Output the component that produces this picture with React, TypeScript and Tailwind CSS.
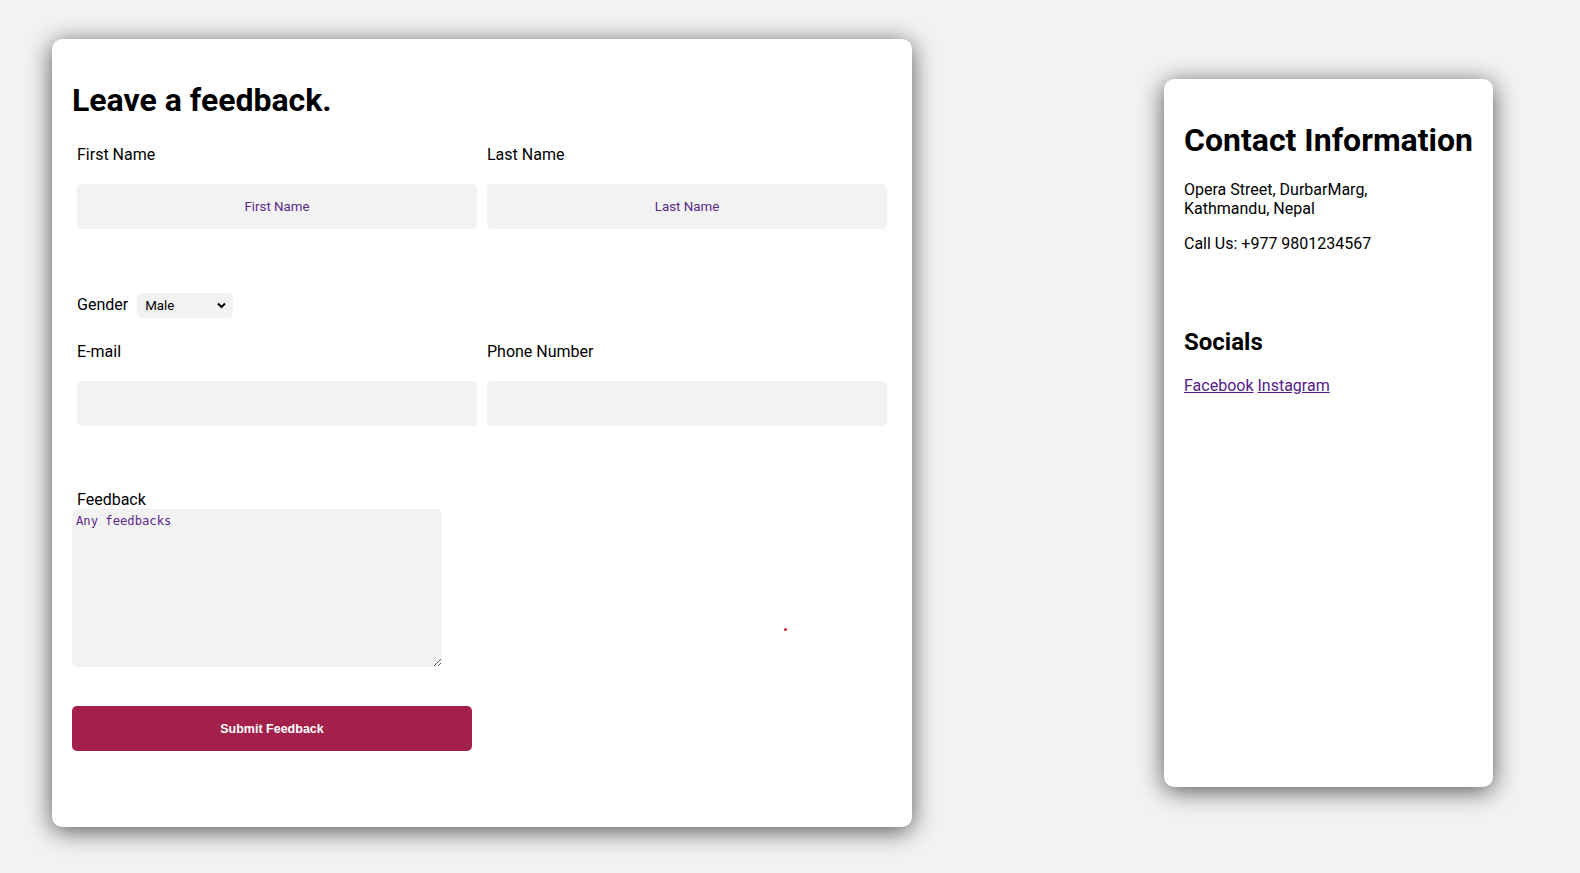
import React from "react";

export default function App() {
  const font = { fontFamily: "Roboto, 'Noto Sans', sans-serif" };
  return (
    <div
      className="w-[1580px] h-[873px] bg-[#f2f2f2] flex items-start pl-[52px] pt-[39px] text-black"
      style={font}
    >
      {/* Feedback card */}
      <div className="relative w-[860px] h-[788px] bg-white rounded-[10px] shadow-[0_4px_24px_rgba(0,0,0,0.65)] pt-[41px] px-[20px] flex flex-col">
        <h1 className="text-[32px] leading-[40px] font-bold">Leave a feedback.</h1>

        <div className="flex mt-[25px]">
          <div className="w-[410px] px-[5px] flex flex-col">
            <label className="text-[16px] leading-[19px]">First Name</label>
            <input
              placeholder="First Name"
              className="mt-[20px] h-[45px] w-[400px] bg-[#f2f2f2] rounded-[5px] text-center text-[13.33px] outline-none placeholder:text-[#5a2a8a]"
            />
          </div>
          <div className="w-[410px] px-[5px] flex flex-col">
            <label className="text-[16px] leading-[19px]">Last Name</label>
            <input
              placeholder="Last Name"
              className="mt-[20px] h-[45px] w-[400px] bg-[#f2f2f2] rounded-[5px] text-center text-[13.33px] outline-none placeholder:text-[#5a2a8a]"
            />
          </div>
        </div>

        <div className="flex items-center mt-[64px] pl-[5px] h-[25px]">
          <label className="text-[16px] leading-[19px] -mt-[2px]">Gender</label>
          <div className="relative ml-[9px]">
            <select className="appearance-none w-[96px] h-[25px] bg-[#f2f2f2] rounded-[5px] pl-[8px] text-[13.33px] outline-none">
              <option>Male</option>
              <option>Female</option>
            </select>
            <svg
              className="absolute right-[7px] top-[9px] pointer-events-none"
              width="9"
              height="7"
              viewBox="0 0 9 7"
            >
              <path d="M1 1.5 L4.5 5 L8 1.5" fill="none" stroke="#000" strokeWidth="2" />
            </svg>
          </div>
        </div>

        <div className="flex mt-[24px]">
          <div className="w-[410px] px-[5px] flex flex-col">
            <label className="text-[16px] leading-[19px]">E-mail</label>
            <input className="mt-[20px] h-[45px] w-[400px] bg-[#f2f2f2] rounded-[5px] text-center text-[13.33px] outline-none" />
          </div>
          <div className="w-[410px] px-[5px] flex flex-col">
            <label className="text-[16px] leading-[19px]">Phone Number</label>
            <input className="mt-[20px] h-[45px] w-[400px] bg-[#f2f2f2] rounded-[5px] text-center text-[13.33px] outline-none" />
          </div>
        </div>

        <label className="mt-[64px] pl-[5px] text-[16px] leading-[19px]">Feedback</label>
        <textarea
          placeholder="Any feedbacks"
          className="w-[370px] h-[158px] bg-[#f2f2f2] rounded-[5px] px-[4px] pt-[5px] text-[12.2px] leading-[15px] outline-none placeholder:text-[#5a2a8a]"
          style={{ fontFamily: "'DejaVu Sans Mono', monospace" }}
        />

        <button
          className="mt-[39px] w-[400px] h-[45px] bg-[#a22049] rounded-[5px] text-white text-[12.5px] font-bold pt-[2px]"
          style={{ fontFamily: "'Liberation Sans', Arial, sans-serif" }}
        >
          Submit Feedback
        </button>

        <span className="absolute left-[732px] top-[589px] w-[3px] h-[3px] rounded-full bg-[#e8182a]" />
      </div>

      {/* Contact card */}
      <div className="ml-[252px] mt-[40px] w-[329px] h-[708px] bg-white rounded-[10px] shadow-[0_4px_24px_rgba(0,0,0,0.65)] pt-[41px] px-[20px] flex flex-col">
        <h1 className="text-[32px] leading-[40px] font-bold whitespace-nowrap">Contact Information</h1>
        <p className="mt-[20px] text-[16px] leading-[19px]">
          Opera Street, DurbarMarg,
          <br />
          Kathmandu, Nepal
        </p>
        <p className="mt-[16px] text-[16px] leading-[19px]">Call Us: +977 9801234567</p>
        <h2 className="mt-[75px] text-[24px] leading-[28px] font-bold">Socials</h2>
        <p className="mt-[20px] text-[16px] leading-[19px]">
          <a href="#" className="underline text-[#551a8b]">Facebook</a>{" "}
          <a href="#" className="underline text-[#551a8b]">Instagram</a>
        </p>
      </div>
    </div>
  );
}
